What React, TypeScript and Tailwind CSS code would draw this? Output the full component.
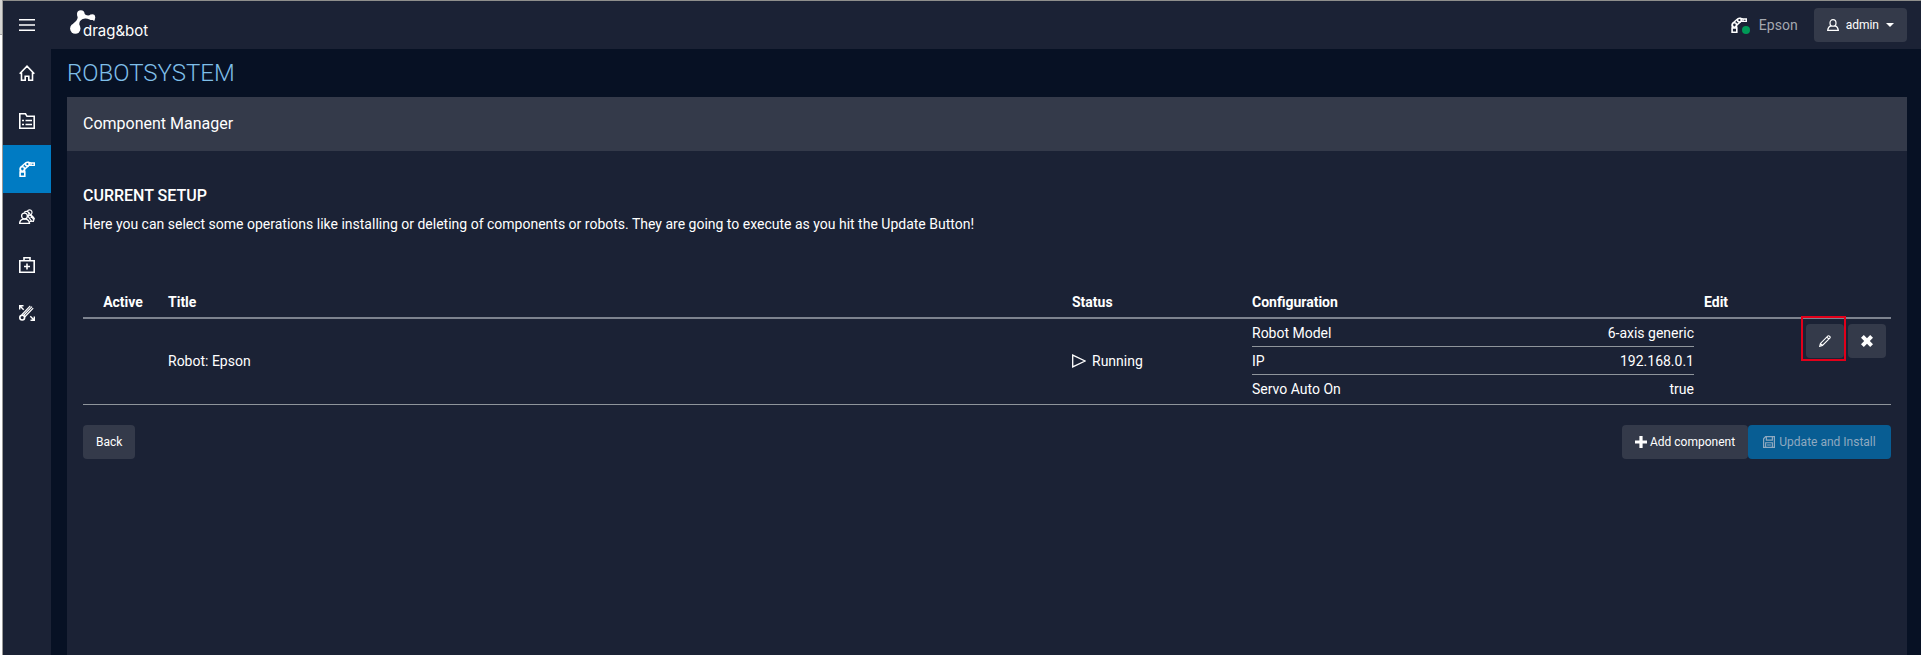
import { useState, type ReactNode } from "react";

interface ConfigEntry {
  label: string;
  value: string;
}

interface RobotComponent {
  id: string;
  title: string;
  status: string;
  config: ConfigEntry[];
}

const components: RobotComponent[] = [
  {
    id: "epson",
    title: "Robot: Epson",
    status: "Running",
    config: [
      { label: "Robot Model", value: "6-axis generic" },
      { label: "IP", value: "192.168.0.1" },
      { label: "Servo Auto On", value: "true" },
    ],
  },
];

// Base for all the thin line icons, drawn on a 16px grid
function LineIcon({ children, className = "size-4" }: { children: ReactNode; className?: string }) {
  return (
    <svg viewBox="0 0 16 16" fill="none" stroke="currentColor" strokeWidth="1.2" className={className} aria-hidden="true">
      {children}
    </svg>
  );
}

function MenuIcon() {
  return (
    <LineIcon>
      <path d="M0 2.700h16M0 8h16M0 13.300h16" strokeWidth="1.600" />
    </LineIcon>
  );
}

function HomeIcon() {
  return (
    <LineIcon>
      <path d="M.7 8.800 8 1.200l7.300 7.600M2.500 7.500v7.800h3.700v-4h3.600v4h3.700V7.500" strokeWidth="1.600" />
    </LineIcon>
  );
}

function ProjectsIcon() {
  return (
    <LineIcon>
      <path d="M.8.800h5.700l1.500 2.500h7.200v11.900H.8z" strokeWidth="1.600" />
      <path d="M3 7.500h2M6.500 7.500h6.500M3 11.500h2M6.500 11.500h6.500" strokeWidth="1.500" />
    </LineIcon>
  );
}

function RobotIcon() {
  return (
    <LineIcon>
      <path d="M1.100 15.200v-4.200h4.700v4.200zM1.500 11V7.500M5.500 11V8.500" strokeWidth="1.600" />
      <circle cx="3.300" cy="8" r="2.200" strokeWidth="1.500" />
      <path d="M2 6 6.800 1.700M5.300 8.500l4.300-3.900" strokeWidth="1.500" />
      <circle cx="8.400" cy="3.100" r="1.900" strokeWidth="1.500" />
      <path d="M8.800 1.200 12 2h3.300v2.400H10M12 2v2.400" strokeWidth="1.400" />
    </LineIcon>
  );
}

function UsersIcon() {
  return (
    <LineIcon>
      <circle cx="5.500" cy="7" r="2.900" strokeWidth="1.300" />
      <path d="M.6 14.300c.2-2.600 1.700-3.700 3.200-4.200h3.400c1.600.500 3.100 1.600 3.300 4.200z" strokeWidth="1.300" />
      <path d="M5.200 3.800c.6-1.600 3.200-2 4.300-.4 1 1.500.3 3-.600 3.800l3.600 4.900-2 .700" />
      <path d="M8.300 2.200C9.200.500 11.900.400 12.800 2.300c.6 1.400.1 2.600-.700 3.400l-1.900 1M12.200 6l3.100 3.400-.9 3-2.200-.300M10 3.500l4.500 7M11.500 8.400l3-.8" />
    </LineIcon>
  );
}

function ToolboxIcon() {
  return (
    <LineIcon>
      <path d="M.8 3.700h14.400v11.500H.8zM5 3.500V.8h6v2.700" strokeWidth="1.600" />
      <path d="M8 6.500v6M5 9.500h6" strokeWidth="1.600" />
    </LineIcon>
  );
}

function CalibrationIcon() {
  return (
    <LineIcon>
      <circle cx="3.200" cy="12.600" r="2.400" strokeWidth="1.600" />
      <path d="M2.600 10 11.300.900M5.700 12 14.200 3.200M4.500 10.500 13 1.700" strokeWidth="1.200" />
      <path d="M4.700 4.700 1 1M.7 4.500V.7h3.800M11.300 11.300l3.700 3.700M15.300 11.500v3.800h-3.800" strokeWidth="1.400" />
    </LineIcon>
  );
}

function UserIcon() {
  return (
    <LineIcon className="size-3">
      <ellipse cx="8" cy="5.200" rx="4" ry="4.400" strokeWidth="1.600" />
      <path d="M5.500 8.900C3 9.800 1.200 11.700.9 15.200h14.200c-.3-3.500-2.100-5.400-4.600-6.300" strokeWidth="1.600" />
    </LineIcon>
  );
}

function SaveIcon() {
  return (
    <LineIcon className="size-3">
      <path d="M3.500.8h11.700v14.400H.8V3.700zM4.500 1v4.500h8V1M3.500 15V9h9v6M5.500 12h5" strokeWidth="1.600" />
    </LineIcon>
  );
}

function PencilIcon() {
  return (
    <LineIcon className="size-3">
      <path d="M.9 15.100l1-3.800L12 1.200c1-.9 3.600 1.400 2.700 2.600L4.600 14zM10.600 2.900l2.500 2.500M2.100 11.500l2.300 2.300" strokeWidth="1.500" />
    </LineIcon>
  );
}

function PlayIcon() {
  return (
    <LineIcon className="size-3.5">
      <path d="M.8 1.200v13.600L15 8z" strokeWidth="1.500" />
    </LineIcon>
  );
}

function PlusIcon() {
  return (
    <svg viewBox="0 0 12 12" fill="currentColor" className="size-3" aria-hidden="true">
      <path d="M4.400 0h3.200v4.400H12v3.200H7.600V12H4.400V7.600H0V4.400h4.400z" />
    </svg>
  );
}

function RemoveIcon() {
  return (
    <svg viewBox="0 0 12 12" fill="currentColor" className="size-3" aria-hidden="true">
      <path d="M2.800 0 6 3.200 9.200 0 12 2.800 8.800 6 12 9.200 9.200 12 6 8.800 2.800 12 0 9.200 3.200 6 0 2.800z" />
    </svg>
  );
}

function Logo() {
  return (
    <a href="#home" className="flex items-start text-white" aria-label="drag&bot">
      <svg viewBox="0 0 27 25" fill="currentColor" className="h-[25px] w-[27px]" aria-hidden="true">
        <circle cx="5.300" cy="18.500" r="5.200" />
        <circle cx="10.800" cy="4" r="3.800" />
        <circle cx="22.300" cy="7.200" r="2.900" />
        <path d="M7.300 5.500C8.800 9 5.500 11.500 3 14l6.800 2.500c-1.300-4 .3-7.200 4.300-7.800C18 8 19 9.800 21.800 10L21 4.500c-2.500 1.500-5 1-6.500-.8z" />
        <path d="M22.300 9.500 25.200 8l-1 3.300z" />
      </svg>
      <span className="-ml-3.5 mt-[11px] font-['Inter',sans-serif] text-[15px] leading-5">drag&amp;bot</span>
    </a>
  );
}

const navItems = [
  { id: "home", label: "Home", icon: <HomeIcon /> },
  { id: "projects", label: "Projects", icon: <ProjectsIcon /> },
  { id: "robotsystem", label: "Robotsystem", icon: <RobotIcon /> },
  { id: "users", label: "Users", icon: <UsersIcon /> },
  { id: "toolbox", label: "Toolbox", icon: <ToolboxIcon /> },
  { id: "calibration", label: "Calibration", icon: <CalibrationIcon /> },
];

function Sidebar({ active, onSelect }: { active: string; onSelect: (id: string) => void }) {
  return (
    <nav className="flex w-12 shrink-0 flex-col bg-[#1b2235] text-white">
      <button type="button" aria-label="Toggle menu" className="flex h-12 items-center justify-center">
        <MenuIcon />
      </button>
      {navItems.map((item) => (
        <a
          key={item.id}
          href={`#${item.id}`}
          aria-label={item.label}
          onClick={() => onSelect(item.id)}
          className={`flex h-12 items-center justify-center ${active === item.id ? "bg-[#007bc3]" : "hover:bg-[#343a4a]"}`}
        >
          {item.icon}
        </a>
      ))}
    </nav>
  );
}

function TopBar() {
  return (
    <header className="flex h-12 items-center justify-between bg-[#1b2235] pr-3.5 pl-[19px]">
      <Logo />
      <div className="flex items-center gap-4">
        <div className="flex items-center gap-3 text-sm text-[#a4a7af]">
          <span className="relative text-white">
            <RobotIcon />
            <span className="absolute -right-[3px] -bottom-px size-2 rounded-full bg-[#009a57]" />
          </span>
          Epson
        </div>
        <button type="button" className="flex h-[34px] items-center rounded-sm bg-[#343a4a] px-[13px] text-xs text-white">
          <UserIcon />
          <span className="mx-[7px]">admin</span>
          <span className="border-x-4 border-t-4 border-x-transparent border-t-white" />
        </button>
      </div>
    </header>
  );
}

function ComponentTable() {
  return (
    <table className="w-full table-fixed border-collapse text-left text-sm leading-5">
      <thead>
        <tr className="border-b-2 border-[#7d838f]">
          <th className="w-20 p-[5px] text-center font-bold">Active</th>
          <th className="w-1/2 p-[5px] font-bold">Title</th>
          <th className="w-[180px] p-[5px] font-bold">Status</th>
          <th className="w-1/4 p-[5px] font-bold">Configuration</th>
          <th className="p-[5px] font-bold">Edit</th>
        </tr>
      </thead>
      <tbody>
        {components.map((component) => (
          <tr key={component.id} className="h-[86px] border-b border-[#8f959b]">
            <td />
            <td className="px-[5px]">{component.title}</td>
            <td className="px-[5px]">
              <span className="flex items-center gap-1.5">
                <PlayIcon />
                {component.status}
              </span>
            </td>
            <td className="px-[5px]">
              <dl>
                {component.config.map((entry) => (
                  <div key={entry.label} className="flex h-7 items-center justify-between border-b border-[#8f959b] last:border-b-0">
                    <dt>{entry.label}</dt>
                    <dd>{entry.value}</dd>
                  </div>
                ))}
              </dl>
            </td>
            <td className="p-[5px] align-top">
              <div className="flex justify-end gap-1">
                <button
                  type="button"
                  aria-label={`Edit ${component.title}`}
                  className="relative flex h-[34px] w-[38px] items-center justify-center rounded-sm bg-[#343a4a]"
                >
                  <PencilIcon />
                  {/* highlight frame around the edit action */}
                  <span className="absolute -top-2 -right-0.5 -bottom-[3px] -left-[5px] border-2 border-[#e2001a]" />
                </button>
                <button
                  type="button"
                  aria-label={`Remove ${component.title}`}
                  className="flex h-[34px] w-[38px] items-center justify-center rounded-sm bg-[#343a4a]"
                >
                  <RemoveIcon />
                </button>
              </div>
            </td>
          </tr>
        ))}
      </tbody>
    </table>
  );
}

export default function App() {
  const [active, setActive] = useState("robotsystem");

  return (
    <div className="flex min-h-screen bg-[#071124] font-['Roboto',sans-serif] text-white">
      {/* window edge */}
      <div className="flex w-[3px] shrink-0 flex-col border-r border-[#9a9a98] bg-white">
        <div className="h-[35px] border-b border-[#a8a8a8] bg-[#d6d6d4]" />
      </div>
      <div className="flex min-w-0 flex-1 border-t border-[#8f8f8c]">
        <Sidebar active={active} onSelect={setActive} />
        <div className="flex min-w-0 flex-1 flex-col">
          <TopBar />
          <main className="flex flex-1 flex-col pr-3.5 pl-4">
            <h1 className="flex h-12 items-center text-2xl font-light text-[#7fbfe9]">ROBOTSYSTEM</h1>
            <section className="flex-1 bg-[#1b2235]">
              <h2 className="flex h-[54px] items-center bg-[#343a4a] px-4 text-base">Component Manager</h2>
              <div className="px-4 pt-[33px]">
                <h3 className="text-base leading-6 font-medium">CURRENT SETUP</h3>
                <p className="mt-1.5 mb-[53px] text-sm leading-5">
                  Here you can select some operations like installing or deleting of components or robots. They are going to
                  execute as you hit the Update Button!
                </p>
                <ComponentTable />
                <div className="mt-5 flex justify-between text-xs">
                  <button type="button" className="h-[34px] rounded-sm bg-[#343a4a] px-[13px]">
                    Back
                  </button>
                  <div className="flex">
                    <button
                      type="button"
                      className="flex h-[34px] min-w-[126px] items-center justify-center gap-[3px] rounded-sm bg-[#343a4a] px-3"
                    >
                      <PlusIcon />
                      Add component
                    </button>
                    <button
                      type="button"
                      disabled
                      className="flex h-[34px] min-w-[143px] items-center justify-center gap-1 rounded-sm bg-[#085d93] px-3 text-[#8fa9c0]"
                    >
                      <SaveIcon />
                      Update and Install
                    </button>
                  </div>
                </div>
              </div>
            </section>
          </main>
        </div>
      </div>
    </div>
  );
}
